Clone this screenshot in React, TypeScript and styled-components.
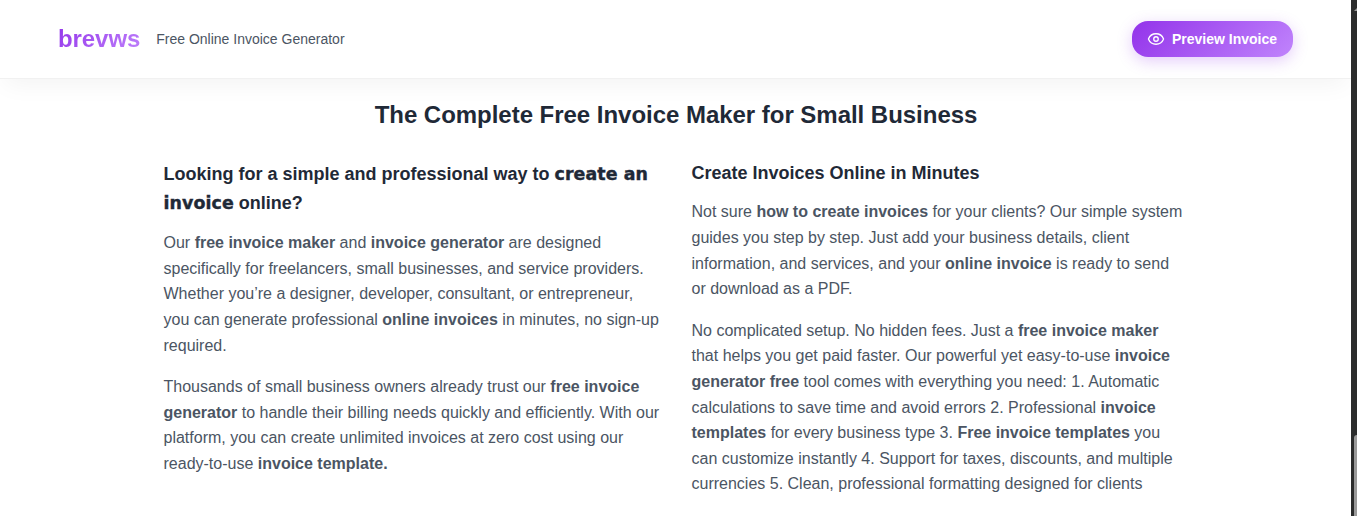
import React from "react";
import styled, { createGlobalStyle } from "styled-components";
import { Eye } from "lucide-react";

const GlobalStyle = createGlobalStyle`
  * { box-sizing: border-box; }
  html, body { margin: 0; padding: 0; background: #ffffff; overflow: hidden; }
  body { font-family: "Liberation Sans", Arial, sans-serif; line-height: 1.6; color: #1f2937; }
`;

const Page = styled.div`
  display: flex;
  width: 100%;
  height: 516px;
  overflow: hidden;
`;

const Content = styled.div`
  flex: 1;
  min-width: 0;
  overflow: hidden;
`;

const Header = styled.header`
  display: flex;
  align-items: center;
  justify-content: space-between;
  height: 79px;
  padding: 0 58px;
  background: #ffffff;
  border-bottom: 1px solid #f1f1f1;
  box-shadow: 0 10px 25px -5px rgba(0, 0, 0, 0.05);
`;

const Brand = styled.div`
  display: flex;
  align-items: center;
  gap: 16px;
`;

const Logo = styled.span`
  font-size: 24px;
  font-weight: 700;
  line-height: 38px;
  letter-spacing: -0.08px;
  background: linear-gradient(135deg, #9333ea, #c084fc);
  background-clip: text;
  -webkit-background-clip: text;
  color: transparent;
`;

const Tagline = styled.span`
  padding-top: 1px;
  font-size: 14px;
  color: #4b5563;
`;

const PreviewButton = styled.button`
  display: flex;
  align-items: center;
  gap: 7px;
  height: 36px;
  padding: 0 16px 0 15px;
  border: 0;
  border-radius: 16px;
  background: linear-gradient(135deg, #9333ea, #c084fc);
  box-shadow: 0 4px 15px rgba(147, 51, 234, 0.25);
  color: #ffffff;
  font-family: inherit;
  font-size: 14px;
  font-weight: 700;
`;

const Main = styled.main`
  width: 1024px;
  margin: 17.2px auto 0;
`;

const Title = styled.h2`
  margin: 0 0 24px;
  padding-left: 1px;
  font-size: 24px;
  font-weight: 700;
  letter-spacing: -0.03px;
  text-align: center;
`;

const Columns = styled.div`
  display: grid;
  grid-template-columns: 1fr 1fr;
  gap: 32px;
`;

const Subtitle = styled.h3<{ $extra?: boolean }>`
  margin: 0;
  padding: ${(p) => (p.$extra ? "1.4px 0 12.6px" : "0 0 12px")};
  font-size: 18px;
  font-weight: 700;
`;

const Heavy = styled.span`
  font-family: "DejaVu Sans", "Arial Black", sans-serif;
  font-size: 17.4px;
  line-height: 1;
  letter-spacing: 0.08px;
  -webkit-text-stroke: 0.4px currentColor;
`;

const Paragraph = styled.p`
  margin: 0 0 16px;
  font-size: 16px;
  color: #4b5563;
`;

const ScrollTrack = styled.div`
  display: flex;
  flex-direction: column;
  align-items: flex-end;
  justify-content: space-between;
  width: 6px;
  overflow: hidden;
  background: #2b2c2c;
`;

const ScrollArrow = styled.svg`
  display: block;
  width: 3px;
  height: 3px;
  margin-top: 8px;
`;

const ScrollThumb = styled.div`
  width: 3px;
  height: 81px;
  border-top-left-radius: 3px;
  background: #9a9a9a;
`;

export default function App() {
  return (
    <>
      <GlobalStyle />
      <Page>
        <Content>
          <Header>
            <Brand>
              <Logo>brevws</Logo>
              <Tagline>Free Online Invoice Generator</Tagline>
            </Brand>
            <PreviewButton>
              <Eye size={18} strokeWidth={1.8} />
              Preview Invoice
            </PreviewButton>
          </Header>
          <Main>
            <Title>The Complete Free Invoice Maker for Small Business</Title>
            <Columns>
              <section>
                <Subtitle $extra>
                  Looking for a simple and professional way to <Heavy>create an invoice</Heavy> online?
                </Subtitle>
                <Paragraph>
                  Our <b>free invoice maker</b> and <b>invoice generator</b> are designed specifically for
                  freelancers, small businesses, and service providers. Whether you’re a designer, developer,
                  consultant, or entrepreneur, you can generate professional <b>online invoices</b> in minutes,
                  no sign-up required.
                </Paragraph>
                <Paragraph>
                  Thousands of small business owners already trust our <b>free invoice generator</b> to handle
                  their billing needs quickly and efficiently. With our platform, you can create unlimited
                  invoices at zero cost using our ready-to-use <b>invoice template.</b>
                </Paragraph>
              </section>
              <section>
                <Subtitle>Create Invoices Online in Minutes</Subtitle>
                <Paragraph>
                  Not sure <b>how to create invoices</b> for your clients? Our simple system guides you step by
                  step. Just add your business details, client information, and services, and your{" "}
                  <b>online invoice</b> is ready to send or download as a PDF.
                </Paragraph>
                <Paragraph>
                  No complicated setup. No hidden fees. Just a <b>free invoice maker</b> that helps you get paid
                  faster. Our powerful yet easy-to-use <b>invoice generator free</b> tool comes with everything
                  you need: 1. Automatic calculations to save time and avoid errors 2. Professional{" "}
                  <b>invoice templates</b> for every business type 3. <b>Free invoice templates</b> you can
                  customize instantly 4. Support for taxes, discounts, and multiple currencies 5. Clean,
                  professional formatting designed for clients
                </Paragraph>
              </section>
            </Columns>
          </Main>
        </Content>
        <ScrollTrack>
          <ScrollArrow viewBox="0 0 3 3">
            <path d="M0 3 L3 0 V3 Z" fill="#9a9a9a" />
          </ScrollArrow>
          <ScrollThumb />
        </ScrollTrack>
      </Page>
    </>
  );
}
